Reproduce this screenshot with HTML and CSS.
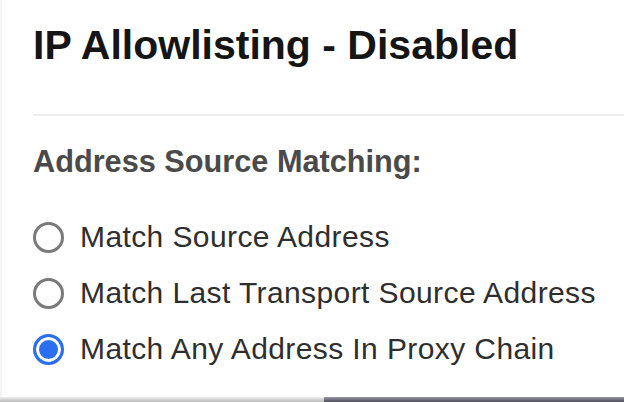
FILE: index.html
```html
<!DOCTYPE html>
<html lang="en">
<head>
<meta charset="utf-8">
<title>IP Allowlisting</title>
<link rel="stylesheet" href="styles.css">
</head>
<body>
  <div class="panel">
    <h1 class="title">IP Allowlisting - Disabled</h1>
    <hr class="divider">
    <section class="section">
      <h2 class="label">Address Source Matching:</h2>
      <div class="options">
        <label class="option"><input class="radio" type="radio" name="match"><span>Match Source Address</span></label>
        <label class="option"><input class="radio" type="radio" name="match"><span>Match Last Transport Source Address</span></label>
        <label class="option"><input class="radio" type="radio" name="match" checked><span>Match Any Address In Proxy Chain</span></label>
      </div>
    </section>
  </div>
  <div class="bottom">
    <div class="bottom-left"></div>
    <div class="bottom-right"></div>
  </div>
</body>
</html>
```
FILE: styles.css
```css
html, body {
  margin: 0;
  padding: 0;
  background: #ffffff;
}
body {
  height: 402px;
  display: flex;
  flex-direction: column;
  font-family: "Liberation Sans", Arial, sans-serif;
  overflow: hidden;
}
.panel {
  flex: 1;
  padding: 22px 0 0 33px;
  border-left: 2px solid #f4f4f4;
}
.title {
  margin: 0 0 0 -2px;
  font-size: 41px;
  font-weight: 700;
  color: #151515;
  line-height: normal;
}
.divider {
  margin: 45px 0 0 -2px;
  border: 0;
  height: 2px;
  background: #ededed;
}
.section {
  margin-top: 28px;
}
.label {
  margin: 0 0 0 -2px;
  font-size: 30.7px;
  font-weight: 700;
  color: #4a4a4a;
  line-height: normal;
}
.options {
  margin-top: 40px;
  display: flex;
  flex-direction: column;
  gap: 22px;
  margin-left: -2px;
}
.option {
  display: flex;
  align-items: center;
  gap: 16px;
  font-size: 30px;
  letter-spacing: 0.4px;
  color: #2e2e2e;
  line-height: normal;
}
.radio {
  appearance: none;
  -webkit-appearance: none;
  margin: 0;
  width: 31px;
  height: 31px;
  border-radius: 50%;
  border: 3px solid #7a7a7a;
  background: #ffffff;
  box-sizing: border-box;
}
.radio:checked {
  border-color: #2a6ff0;
  background: #2a6ff0;
  box-shadow: inset 0 0 0 3px #ffffff;
}
.bottom {
  height: 5px;
  display: flex;
}
.bottom-left {
  width: 324px;
  background: linear-gradient(#eeeeee, #b9b9b9);
}
.bottom-right {
  flex: 1;
  background: linear-gradient(#9a9aa6, #4b4b5a);
}
```
